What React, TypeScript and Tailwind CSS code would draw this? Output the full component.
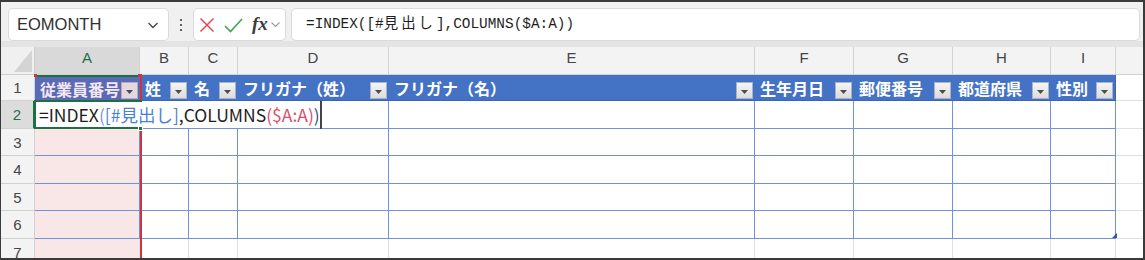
import React from 'react';

const COLS = [
  { key: 'A', w: 'w-[105px]' },
  { key: 'B', w: 'w-[49px]' },
  { key: 'C', w: 'w-[49px]' },
  { key: 'D', w: 'w-[151px]' },
  { key: 'E', w: 'w-[366px]' },
  { key: 'F', w: 'w-[99px]' },
  { key: 'G', w: 'w-[99px]' },
  { key: 'H', w: 'w-[98px]' },
  { key: 'I', w: 'w-[65px]' },
];

const HEADERS = ['従業員番号', '姓', '名', 'フリガナ（姓）', 'フリガナ（名）', '生年月日', '郵便番号', '都道府県', '性別'];

// row number + height class (row 7 is cut off by the window)
const ROWS = [
  { n: 1, h: 'h-[26px]' },
  { n: 2, h: 'h-[28px]' },
  { n: 3, h: 'h-[27px]' },
  { n: 4, h: 'h-[28px]' },
  { n: 5, h: 'h-[27px]' },
  { n: 6, h: 'h-[28px]' },
  { n: 7, h: 'h-[27px]' },
];

const UI_FONT = "font-['Liberation_Sans','Noto_Sans_CJK_JP',sans-serif]";
const CELL_FONT = "font-['Noto_Sans_CJK_JP',sans-serif]";

function FilterButton({ pink }: { pink?: boolean }) {
  return (
    <div
      className={`w-[17px] h-[17px] shrink-0 border flex items-center justify-center ${
        pink ? 'border-[#b9a9bd] bg-[#e4d8e0]' : 'border-[#a8b3c6] bg-linear-to-b from-[#f5f5f5] to-[#dcdcdc]'
      }`}
    >
      <svg width="7" height="4" viewBox="0 0 7 4" className="mt-[3px]">
        <path d="M0 0h7L3.5 4z" fill="#4d4d4d" />
      </svg>
    </div>
  );
}

function FormulaBar() {
  return (
    <div className="h-[39px] shrink-0 bg-[#f0f0f0] pt-[6px] pl-[7px] pr-[3px] flex items-start">
      {/* name box */}
      <div className="w-[161px] h-[33px] bg-white border border-[#dadada] rounded-[5px] flex items-center justify-between pl-[8px] pr-[8px]">
        <span className={`${UI_FONT} text-[16.5px] text-[#303030]`}>EOMONTH</span>
        <svg width="14" height="14" viewBox="0 0 14 14">
          <path d="M2.5 5l4.5 4.5L11.5 5" fill="none" stroke="#444" strokeWidth="1.3" />
        </svg>
      </div>
      {/* dots */}
      <div className="w-[24px] h-[33px] flex flex-col items-center justify-center gap-[3px]">
        <span className="w-[2px] h-[2px] rounded-full bg-[#333]" />
        <span className="w-[2px] h-[2px] rounded-full bg-[#333]" />
        <span className="w-[2px] h-[2px] rounded-full bg-[#333]" />
      </div>
      {/* cancel / enter / fx */}
      <div className="w-[93px] h-[33px] bg-white border border-[#dadada] rounded-[5px] flex items-center pl-[5px] gap-[9px]">
        <svg width="16" height="16" viewBox="0 0 16 16">
          <path d="M1.5 1.5l13 13M14.5 1.5l-13 13" stroke="#e2484f" strokeWidth="1.5" fill="none" />
        </svg>
        <svg width="19" height="16" viewBox="0 0 19 16">
          <path d="M1 9l5.5 5.5L18 2" stroke="#47a45c" strokeWidth="1.7" fill="none" />
        </svg>
        <div className="flex items-center gap-[2px]">
          <span className="font-['Liberation_Serif',serif] italic font-bold text-[19px] leading-none text-[#3c3c3c] -mt-[2px]">fx</span>
          <svg width="11" height="11" viewBox="0 0 11 11">
            <path d="M1.5 3.5l4 4 4-4" fill="none" stroke="#9a9a9a" strokeWidth="1.1" />
          </svg>
        </div>
      </div>
      {/* formula box */}
      <div className="flex-1 ml-[5px] h-[33px] bg-white border border-[#dadada] rounded-[5px] flex items-center pl-[14px]">
        <span className="font-['Liberation_Mono','Noto_Sans_CJK_JP',monospace] text-[14.4px] text-[#1e1e1e]">
          =INDEX([#<span className="tracking-[3px]">見出し</span>],COLUMNS($A:A))
        </span>
      </div>
    </div>
  );
}

function Sheet() {
  return (
    <div className="relative flex-1 flex flex-col bg-white overflow-hidden">
      {/* column header row */}
      <div className="h-[28px] shrink-0 flex">
        <div className="w-[34px] shrink-0 bg-[#f0f0f0] border-r border-b border-[#cfcfcf] flex items-end justify-end pr-[2px] pb-[2px]">
          <svg width="18" height="22" viewBox="0 0 18 22">
            <path d="M18 0V22H0z" fill="#d4d4d4" />
          </svg>
        </div>
        {COLS.map((c) => (
          <div
            key={c.key}
            className={`${c.w} shrink-0 ${UI_FONT} border-r border-b border-[#d2d2d2] flex items-center justify-center pb-[5px] text-[15px] ${
              c.key === 'A' ? 'bg-[#d9d9d9] text-[#1d7044]' : 'bg-[#f3f3f3] text-[#454545]'
            }`}
          >
            {c.key}
          </div>
        ))}
        <div className="flex-1 bg-[#f3f3f3] border-b border-[#d2d2d2]" />
      </div>

      {ROWS.map(({ n: r, h }) => (
        <div key={r} className={`${h} shrink-0 flex`}>
          <div
            className={`w-[34px] shrink-0 ${UI_FONT} border-b border-[#d2d2d2] flex items-center justify-center pt-[2px] text-[15px] ${
              r === 2 ? 'bg-[#dcdcdc] text-[#1d7044] border-r-2 border-r-[#1d7044]' : 'bg-[#f3f3f3] text-[#454545] border-r'
            }`}
          >
            {r}
          </div>
          {COLS.map((c, i) => {
            if (r === 1) {
              const sel = c.key === 'A';
              return (
                <div
                  key={c.key}
                  className={`${c.w} shrink-0 flex items-center justify-between pl-[5px] pr-[2px] border-b border-b-[#3c63b4] ${
                    sel ? 'bg-[#5a6ab5] border-t-2 border-t-[#1d7044]' : 'bg-[#4472c4]'
                  } ${c.key === 'I' ? 'border-r border-r-[#3c63b4]' : ''}`}
                >
                  <span
                    className={`${CELL_FONT} font-bold text-[16px] leading-none whitespace-nowrap ${sel ? 'text-[#f3e8f0]' : 'text-white'}`}
                  >
                    {HEADERS[i]}
                  </span>
                  <div className="self-end mb-[1px]">
                    <FilterButton pink={sel} />
                  </div>
                </div>
              );
            }
            const inTable = r <= 6;
            const pink = c.key === 'A' && r >= 3;
            return (
              <div
                key={c.key}
                className={`${c.w} shrink-0 border-r border-b ${inTable ? 'border-[#6f93d8]' : 'border-[#e0e0e0]'} ${
                  pink ? 'bg-[#f9e7e7]' : 'bg-white'
                }`}
              />
            );
          })}
          <div className="flex-1 border-b border-[#e0e0e0]" />
        </div>
      ))}

      {/* $A:A reference border */}
      <div className="absolute left-[139px] top-[28px] bottom-0 w-[2px] bg-[#d0343b]" />
      <div className="absolute left-[33px] top-[27px] w-[3px] h-[3px] bg-[#d0343b]" />
      <div className="absolute left-[137px] top-[27px] w-[4px] h-[3px] bg-[#d0343b]" />

      {/* active cell A2 in edit mode */}
      <div className="absolute left-[33px] top-[54px] w-[288px] h-[27px] bg-white border-l-2 border-[#1d7044] flex items-center pl-[3px]">
        <span className={`${CELL_FONT} text-[17.5px] leading-none whitespace-nowrap text-[#1e1e1e]`}>
          =INDEX<span className="text-[#7b9bd5]">(</span>
          <span className="text-[#4a7fd9]">[#見出し]</span>,COLUMNS
          <span className="text-[#d6506a]">($A:A)</span>
          <span className="text-[#3b4f80]">)</span>
        </span>
        <div className="absolute right-0 top-0 -bottom-[1px] w-[2px] bg-[#444]" />
        <div className="absolute -left-[2px] top-[-1px] w-[108px] h-[2px] bg-[#1d7044]" />
        <div className="absolute -left-[2px] -bottom-[1px] w-[108px] h-[2px] bg-[#1d7044]" />
      </div>
      <div className="absolute left-[137px] top-[79px] w-[5px] h-[5px] bg-[#1d7044] border border-white" />

      {/* table resize handle */}
      <svg className="absolute left-[1111px] top-[186px]" width="5" height="5" viewBox="0 0 5 5">
        <path d="M5 0V5H0z" fill="#2f55b8" />
      </svg>
    </div>
  );
}

export default function App() {
  return (
    <div className="w-[1145px] h-[260px] border-t-2 border-l border-r-2 border-b-2 border-[#3a3a3a] flex flex-col overflow-hidden bg-white">
      <FormulaBar />
      <div className="h-[6px] shrink-0 bg-[#e4e4e4]" />
      <Sheet />
    </div>
  );
}
